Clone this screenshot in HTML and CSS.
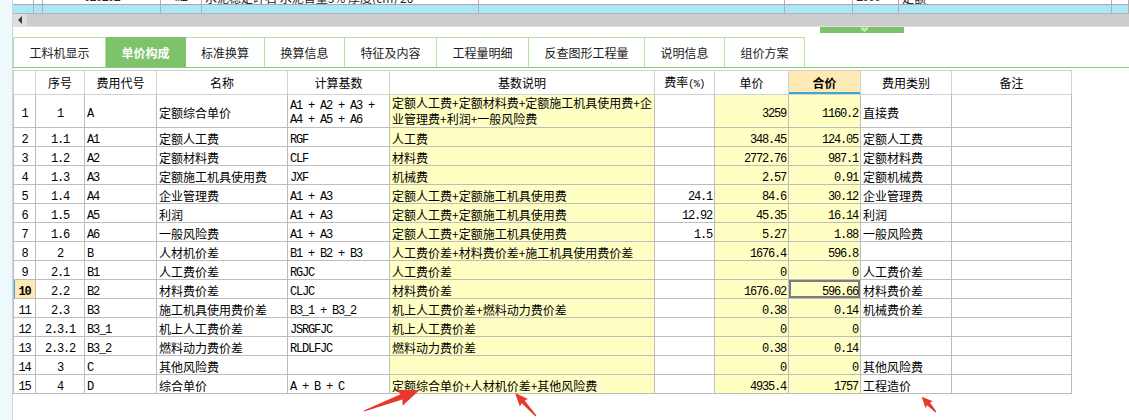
FILE: index.html
```html
<!DOCTYPE html>
<html lang="zh">
<head>
<meta charset="utf-8">
<title>单价构成</title>
<link rel="stylesheet" href="styles.css">
</head>
<body>
<div class="app">
  <div class="sidebar"></div>
  <div class="main">
    <div class="toprow partial">
      <div class="tc"></div><div class="tc"></div>
      <div class="tc center mono"><span class="sliver">020101</span></div>
      <div class="tc center mono"><span class="sliver">m2</span></div>
      <div class="tc"><span class="sliver">水泥稳定碎石 水泥含量5% 厚度(cm) 20</span></div>
      <div class="tc"></div>
      <div class="tc"></div>
      <div class="tc mono"><span class="sliver">1000</span></div>
      <div class="tc"><span class="sliver">定额</span></div>
      <div class="tc"></div>
    </div>
    <div class="toprow blue">
      <div class="tc"></div><div class="tc"></div><div class="tc"></div><div class="tc"></div><div class="tc"></div>
      <div class="tc"></div><div class="tc"></div><div class="tc"></div><div class="tc"></div><div class="tc"></div>
    </div>
    <div class="hscroll">
      <div class="hbtn"><span class="tri"></span></div>
      <div class="hthumb"></div>
    </div>
    <div class="splitter">
      <div class="handle">
        <svg width="9" height="6" viewBox="0 0 9 6"><polyline points="1,1 4.5,4 8,1" fill="none" stroke="#e8f6e2" stroke-width="1.2"/><polyline points="2.5,0 4.5,2 6.5,0" fill="none" stroke="#e8f6e2" stroke-width="1"/></svg>
      </div>
    </div>
    <div class="tabs">
      <div class="tab first w93">工料机显示</div>
      <div class="tab active w80">单价构成</div>
      <div class="tab w79">标准换算</div>
      <div class="tab w80">换算信息</div>
      <div class="tab w92">特征及内容</div>
      <div class="tab w92">工程量明细</div>
      <div class="tab w116">反查图形工程量</div>
      <div class="tab w80">说明信息</div>
      <div class="tab w80">组价方案</div>
    </div>
    <table class="grid">
      <colgroup>
        <col class="k1"><col class="k2"><col class="k3"><col class="k4"><col class="k5"><col class="k6">
        <col class="k7"><col class="k8"><col class="k9"><col class="k10"><col class="k11">
      </colgroup>
      <thead>
        <tr class="hdr">
          <th></th><th>序号</th><th>费用代号</th><th>名称</th><th>计算基数</th><th>基数说明</th>
          <th>费率<span class="pct">(%)</span></th><th>单价</th><th class="sorted">合价</th><th>费用类别</th><th>备注</th>
        </tr>
      </thead>
      <tbody>
        <tr class="tall">
          <td class="no mono">1</td><td class="seq mono">1</td><td class="mono">A</td><td>定额综合单价</td>
          <td class="mono ml">A1 + A2 + A3 +<br>A4 + A5 + A6</td>
          <td class="y ml">定额人工费+定额材料费+定额施工机具使用费+企<br>业管理费+利润+一般风险费</td>
          <td class="num mono"></td><td class="y num mono">3259</td><td class="y num mono">1160.2</td><td>直接费</td><td></td>
        </tr>
        <tr>
          <td class="no mono">2</td><td class="seq mono">1.1</td><td class="mono">A1</td><td>定额人工费</td><td class="mono">RGF</td>
          <td class="y">人工费</td><td class="num mono"></td><td class="y num mono">348.45</td><td class="y num mono">124.05</td><td>定额人工费</td><td></td>
        </tr>
        <tr>
          <td class="no mono">3</td><td class="seq mono">1.2</td><td class="mono">A2</td><td>定额材料费</td><td class="mono">CLF</td>
          <td class="y">材料费</td><td class="num mono"></td><td class="y num mono">2772.76</td><td class="y num mono">987.1</td><td>定额材料费</td><td></td>
        </tr>
        <tr>
          <td class="no mono">4</td><td class="seq mono">1.3</td><td class="mono">A3</td><td>定额施工机具使用费</td><td class="mono">JXF</td>
          <td class="y">机械费</td><td class="num mono"></td><td class="y num mono">2.57</td><td class="y num mono">0.91</td><td>定额机械费</td><td></td>
        </tr>
        <tr>
          <td class="no mono">5</td><td class="seq mono">1.4</td><td class="mono">A4</td><td>企业管理费</td><td class="mono">A1 + A3</td>
          <td class="y">定额人工费+定额施工机具使用费</td><td class="num mono">24.1</td><td class="y num mono">84.6</td><td class="y num mono">30.12</td><td>企业管理费</td><td></td>
        </tr>
        <tr>
          <td class="no mono">6</td><td class="seq mono">1.5</td><td class="mono">A5</td><td>利润</td><td class="mono">A1 + A3</td>
          <td class="y">定额人工费+定额施工机具使用费</td><td class="num mono">12.92</td><td class="y num mono">45.35</td><td class="y num mono">16.14</td><td>利润</td><td></td>
        </tr>
        <tr>
          <td class="no mono">7</td><td class="seq mono">1.6</td><td class="mono">A6</td><td>一般风险费</td><td class="mono">A1 + A3</td>
          <td class="y">定额人工费+定额施工机具使用费</td><td class="num mono">1.5</td><td class="y num mono">5.27</td><td class="y num mono">1.88</td><td>一般风险费</td><td></td>
        </tr>
        <tr>
          <td class="no mono">8</td><td class="seq mono">2</td><td class="mono">B</td><td>人材机价差</td><td class="mono">B1 + B2 + B3</td>
          <td class="y">人工费价差+材料费价差+施工机具使用费价差</td><td class="num mono"></td><td class="y num mono">1676.4</td><td class="y num mono">596.8</td><td></td><td></td>
        </tr>
        <tr>
          <td class="no mono">9</td><td class="seq mono">2.1</td><td class="mono">B1</td><td>人工费价差</td><td class="mono">RGJC</td>
          <td class="y">人工费价差</td><td class="num mono"></td><td class="y num mono">0</td><td class="y num mono">0</td><td>人工费价差</td><td></td>
        </tr>
        <tr>
          <td class="no mono current">10</td><td class="seq mono">2.2</td><td class="mono">B2</td><td>材料费价差</td><td class="mono">CLJC</td>
          <td class="y">材料费价差</td><td class="num mono"></td><td class="y num mono">1676.02</td><td class="y num mono selected">596.66</td><td>材料费价差</td><td></td>
        </tr>
        <tr>
          <td class="no mono">11</td><td class="seq mono">2.3</td><td class="mono">B3</td><td>施工机具使用费价差</td><td class="mono">B3_1 + B3_2</td>
          <td class="y">机上人工费价差+燃料动力费价差</td><td class="num mono"></td><td class="y num mono">0.38</td><td class="y num mono">0.14</td><td>机械费价差</td><td></td>
        </tr>
        <tr>
          <td class="no mono">12</td><td class="seq mono">2.3.1</td><td class="mono">B3_1</td><td>机上人工费价差</td><td class="mono">JSRGFJC</td>
          <td class="y">机上人工费价差</td><td class="num mono"></td><td class="y num mono">0</td><td class="y num mono">0</td><td></td><td></td>
        </tr>
        <tr>
          <td class="no mono">13</td><td class="seq mono">2.3.2</td><td class="mono">B3_2</td><td>燃料动力费价差</td><td class="mono">RLDLFJC</td>
          <td class="y">燃料动力费价差</td><td class="num mono"></td><td class="y num mono">0.38</td><td class="y num mono">0.14</td><td></td><td></td>
        </tr>
        <tr>
          <td class="no mono">14</td><td class="seq mono">3</td><td class="mono">C</td><td>其他风险费</td><td class="mono"></td>
          <td class="y"></td><td class="num mono"></td><td class="y num mono">0</td><td class="y num mono">0</td><td>其他风险费</td><td></td>
        </tr>
        <tr>
          <td class="no mono">15</td><td class="seq mono">4</td><td class="mono">D</td><td>综合单价</td><td class="mono">A + B + C</td>
          <td class="y">定额综合单价+人材机价差+其他风险费</td><td class="num mono"></td><td class="y num mono">4935.4</td><td class="y num mono">1757</td><td>工程造价</td><td></td>
        </tr>
      </tbody>
    </table>
  </div>
  <svg class="annot" width="1129" height="420" viewBox="0 0 1129 420">
    <polygon transform="translate(364,411) rotate(-20.5)" points="0,-0.6 40,-2.8 38,-8.5 59,0 38,8.5 40,2.8 0,0.6" fill="#e8382e"/>
    <polygon transform="translate(536,416) rotate(-132.3)" points="0,-0.6 19,-2 18,-5.5 31,0 18,5.5 19,2 0,0.6" fill="#e8382e"/>
    <polygon transform="translate(936,412) rotate(-133)" points="0,-0.6 11,-2 10,-5 21,0 10,5 11,2 0,0.6" fill="#e8382e"/>
  </svg>
</div>
</body>
</html>
```

FILE: styles.css
```css
* {
  box-sizing: border-box;
}

html, body {
  margin: 0;
  padding: 0;
}

body {
  width: 1129px;
  height: 420px;
  overflow: hidden;
  background: #ffffff;
  color: #000000;
  font-family: "Noto Sans CJK SC", "Noto Sans", sans-serif;
  font-size: 12px;
}

.app {
  position: relative;
  display: flex;
  width: 1129px;
  height: 420px;
}

.sidebar {
  flex: none;
  width: 12px;
  background: #eef9fd;
}

.main {
  flex: 1;
  min-width: 0;
  border-left: 1px solid #c9d6dc;
  background: #ffffff;
}

/* top list remainder */
.toprow {
  display: grid;
  grid-template-columns: 21px 9px 118px 41px 277px 306px 68px 46px 213px 1fr;
  overflow: hidden;
}

.toprow.partial {
  height: 5px;
  background: #ffffff;
  border-bottom: 1px solid #a9a9a9;
}

.toprow.blue {
  height: 9px;
  background: #abe7f8;
  border-bottom: 1px solid #b4b4b4;
}

.tc {
  border-right: 1px solid #b0b0b0;
  overflow: hidden;
  white-space: nowrap;
  padding-left: 3px;
}

.tc.center {
  text-align: center;
  padding-left: 0;
}

.sliver {
  display: block;
  line-height: 12px;
  margin-top: -8px;
  color: #222;
}

.mono {
  font-family: "Liberation Mono", "DejaVu Sans Mono", monospace;
  font-size: 12px;
  letter-spacing: -1.2px;
}

/* horizontal scrollbar */
.hscroll {
  display: flex;
  height: 13px;
  background: #cdcdcd;
  border-bottom: 1px solid #e2e2e2;
}

.hbtn {
  width: 14px;
  display: flex;
  align-items: center;
  justify-content: center;
  background: #dedede;
}

.tri {
  width: 0;
  height: 0;
  border-top: 4px solid transparent;
  border-bottom: 4px solid transparent;
  border-right: 4px solid #3a3a3a;
}

.hthumb {
  flex: 1;
}

/* collapse handle */
.splitter {
  height: 10px;
  padding-left: 807px;
}

.handle {
  width: 84px;
  height: 6px;
  background: #7ec36b;
  display: flex;
  justify-content: center;
  align-items: flex-start;
  padding-left: 4px;
}

.handle svg {
  display: block;
}

/* tabs */
.tabs {
  display: flex;
  height: 31px;
  border-bottom: 1px solid #8ccb75;
}

.tab {
  height: 30px;
  display: flex;
  align-items: center;
  justify-content: center;
  border-top: 1px solid #b4e1a0;
  border-right: 1px solid #b4e1a0;
  font-size: 12px;
  color: #1a1a1a;
  background: #ffffff;
}

.tab.first {
  border-left: 1px solid #b4e1a0;
}

.tab.active {
  background: #7ec36b;
  border-color: #7ec36b;
  color: #ffffff;
  font-weight: bold;
}

.w79 { width: 79px; }
.w80 { width: 80px; }
.w92 { width: 92px; }
.w93 { width: 93px; }
.w116 { width: 116px; }

/* grid */
.grid {
  margin-top: 2px;
  width: 1058px;
  table-layout: fixed;
  border-collapse: collapse;
}

.k1 { width: 22px; }
.k2 { width: 49px; }
.k3 { width: 72px; }
.k4 { width: 131px; }
.k5 { width: 102px; }
.k6 { width: 265px; }
.k7 { width: 60px; }
.k8 { width: 74px; }
.k9 { width: 72px; }
.k10 { width: 91px; }
.k11 { width: 120px; }

.grid th,
.grid td {
  border: 1px solid #bdbdbd;
  white-space: nowrap;
  overflow: hidden;
  text-align: left;
}

.grid th {
  height: 24px;
  padding: 0 2px;
  line-height: 15px;
  vertical-align: middle;
  font-weight: normal;
  text-align: center;
  border-color: #d2d2d2;
  font-size: 12px;
}

.grid th .pct {
  font-family: "Liberation Mono", monospace;
  font-size: 10px;
  letter-spacing: -0.5px;
}

.grid th.sorted {
  background: #fdeab4;
  font-weight: bold;
  box-shadow: inset 0 -2px 0 #3ea7d6;
}

.grid tbody tr {
  height: 19px;
}

.grid td {
  height: 19px;
  vertical-align: top;
  padding: 4px 2px 0 2px;
  line-height: 14px;
}

.grid td.mono {
  padding-top: 6px;
  line-height: 12px;
}

/* two-line first row */
.grid tbody tr.tall {
  height: 33px;
}

.grid tr.tall td {
  height: 33px;
  vertical-align: middle;
  padding-top: 3px;
  line-height: 14px;
}

.grid tr.tall td.mono {
  padding-top: 6px;
  line-height: 12px;
}

.grid tr.tall td.ml {
  vertical-align: top;
  padding-top: 0;
  line-height: 16px;
}

.grid tr.tall td.mono.ml {
  padding-top: 4px;
  line-height: 14px;
}

.grid td.no,
.grid td.seq {
  text-align: center;
  padding-left: 0;
  padding-right: 0;
}

.grid td.no.current {
  background: #fdeab4;
  font-weight: bold;
  box-shadow: inset 1px 0 0 #3ea7d6;
}

.grid td.num {
  text-align: right;
  padding-right: 2px;
}

.grid td.y {
  background: #ffffc4;
}

.grid td.selected {
  box-shadow: inset 0 0 0 2px #7c7c7c;
}

/* annotation arrows */
.annot {
  position: absolute;
  left: 0;
  top: 0;
  pointer-events: none;
}
```
